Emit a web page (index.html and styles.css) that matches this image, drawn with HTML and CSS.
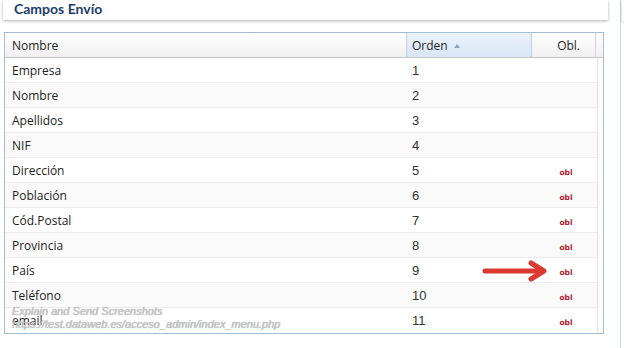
FILE: index.html
```html
<!DOCTYPE html>
<html lang="es">
<head>
    <meta charset="UTF-8">
    <title>Campos Envío</title>
    <link rel="stylesheet" href="styles.css">
</head>
<body>
    <div class="page">
        <div class="main">
            <div class="panel-title">Campos Envío</div>

            <div class="grid">
                <div class="grid-head">
                    <div class="hcell col-name">Nombre</div>
                    <div class="hcell col-order sorted">Orden <span class="sort-arrow"></span></div>
                    <div class="hcell col-req">Obl.</div>
                    <div class="hcell col-fill"></div>
                </div>
                <div class="grid-body">
                    <div class="row"><div class="cell col-name">Empresa</div><div class="cell col-order num">1</div><div class="cell col-req"></div></div>
                    <div class="row alt"><div class="cell col-name">Nombre</div><div class="cell col-order num">2</div><div class="cell col-req"></div></div>
                    <div class="row"><div class="cell col-name">Apellidos</div><div class="cell col-order num">3</div><div class="cell col-req"></div></div>
                    <div class="row alt"><div class="cell col-name">NIF</div><div class="cell col-order num">4</div><div class="cell col-req"></div></div>
                    <div class="row"><div class="cell col-name">Dirección</div><div class="cell col-order num">5</div><div class="cell col-req"><span class="obl">obl</span></div></div>
                    <div class="row alt"><div class="cell col-name">Población</div><div class="cell col-order num">6</div><div class="cell col-req"><span class="obl">obl</span></div></div>
                    <div class="row"><div class="cell col-name">Cód.Postal</div><div class="cell col-order num">7</div><div class="cell col-req"><span class="obl">obl</span></div></div>
                    <div class="row alt"><div class="cell col-name">Provincia</div><div class="cell col-order num">8</div><div class="cell col-req"><span class="obl">obl</span></div></div>
                    <div class="row"><div class="cell col-name">País</div><div class="cell col-order num">9</div><div class="cell col-req"><span class="obl">obl</span></div></div>
                    <div class="row alt"><div class="cell col-name">Teléfono</div><div class="cell col-order num">10</div><div class="cell col-req"><span class="obl">obl</span></div></div>
                    <div class="row"><div class="cell col-name">email</div><div class="cell col-order num">11</div><div class="cell col-req"><span class="obl">obl</span></div></div>
                </div>
            </div>
        </div>
        <div class="side">
            <div class="side-panel"></div>
        </div>
    </div>

    <!-- red pointer arrow -->
    <svg class="arrow" width="70" height="22" viewBox="0 0 70 22">
        <path d="M4 11 H60" stroke="#dc3a30" stroke-width="5" stroke-linecap="round" fill="none"/>
        <path d="M50 3 L63 11 L50 19" stroke="#dc3a30" stroke-width="5" stroke-linecap="round" stroke-linejoin="round" fill="none"/>
    </svg>

    <div class="capture-note">
        <div>Explain and Send Screenshots</div>
        <div>https://test.dataweb.es/acceso_admin/index_menu.php</div>
    </div>
</body>
</html>
```

FILE: styles.css
```css
body {
    margin: 0;
    background: #fff;
    font-family: "Open Sans", "Noto Sans", sans-serif;
    color: #222;
    position: relative;
    height: 348px;
    overflow: hidden;
}

.page {
    display: flex;
    height: 348px;
}

.main {
    width: 620px;
}

.side {
    flex: 1;
    border-left: 1px solid #c9d6e4;
    padding-left: 1px;
}

.side-panel {
    height: 21px;
    background: #fff;
    box-shadow: 0 1px 3px rgba(0, 0, 0, 0.3);
}

.panel-title {
    margin: 0 12px 0 3px;
    height: 20px;
    padding-left: 11px;
    background: #fff;
    box-shadow: 0 1px 3px rgba(0, 0, 0, 0.32);
    font-family: "Lato", sans-serif;
    font-weight: 700;
    font-size: 14px;
    line-height: 18px;
    color: #1b3c6c;
}

.grid {
    margin: 12px 0 0 4px;
    width: 598px;
    border: 1px solid #a3bdd9;
}

.grid-head {
    display: flex;
    height: 24px;
    border-bottom: 1px solid #c5c5c5;
    background: linear-gradient(#fff, #f0f0f0);
}

.hcell {
    box-sizing: border-box;
    font-size: 12px;
    line-height: 25px;
    color: #222;
    border-right: 1px solid #d4d4d4;
}

.grid-head .col-name {
    padding-left: 7px;
}

.grid-head .col-order {
    padding-left: 5px;
}

.grid-head .col-req {
    text-align: right;
    padding-right: 15px;
}

.col-name {
    width: 402px;
}

.col-order {
    width: 126px;
}

.col-req {
    width: 64px;
}

.col-fill {
    flex: 1;
    border-right: none;
}

.sorted {
    background: linear-gradient(#ebf3fd, #d9e6f6);
    border-left: 1px solid #bccfe6;
    border-right: 1px solid #bccfe6;
    margin-left: -1px;
}

.sort-arrow {
    display: inline-block;
    width: 0;
    height: 0;
    margin-left: 3px;
    vertical-align: 2px;
    border-left: 3.5px solid transparent;
    border-right: 3.5px solid transparent;
    border-bottom: 4px solid #8aa4c4;
}

.grid-body {
    width: 592px;
    border-right: 1px solid #e4e4e4;
}

.row {
    display: flex;
    height: 24px;
    border-bottom: 1px solid #ececec;
    background: #fff;
}

.row.alt {
    background: #fafafa;
}

.row:last-child {
    border-bottom: none;
    height: 25px;
}

.cell {
    box-sizing: border-box;
    font-size: 12px;
    line-height: 26px;
}

.row .col-name {
    padding-left: 7px;
}

.row .num {
    padding-left: 5px;
    font-family: "Liberation Sans", Arial, sans-serif;
    font-size: 13px;
    color: #333;
}

.row .col-req {
    text-align: center;
}

.obl {
    font-family: "DejaVu Sans", Verdana, sans-serif;
    font-weight: 700;
    font-size: 7.5px;
    color: #b01a2a;
    padding-left: 2px;
}

.arrow {
    position: absolute;
    left: 481px;
    top: 260px;
}

.capture-note {
    position: absolute;
    left: 12px;
    top: 305px;
    font-family: "Liberation Sans", Arial, sans-serif;
    font-size: 11px;
    font-style: italic;
    line-height: 13px;
    color: #cbcbcb;
    text-shadow: 0 0 1px #8d8d8d;
}
```
